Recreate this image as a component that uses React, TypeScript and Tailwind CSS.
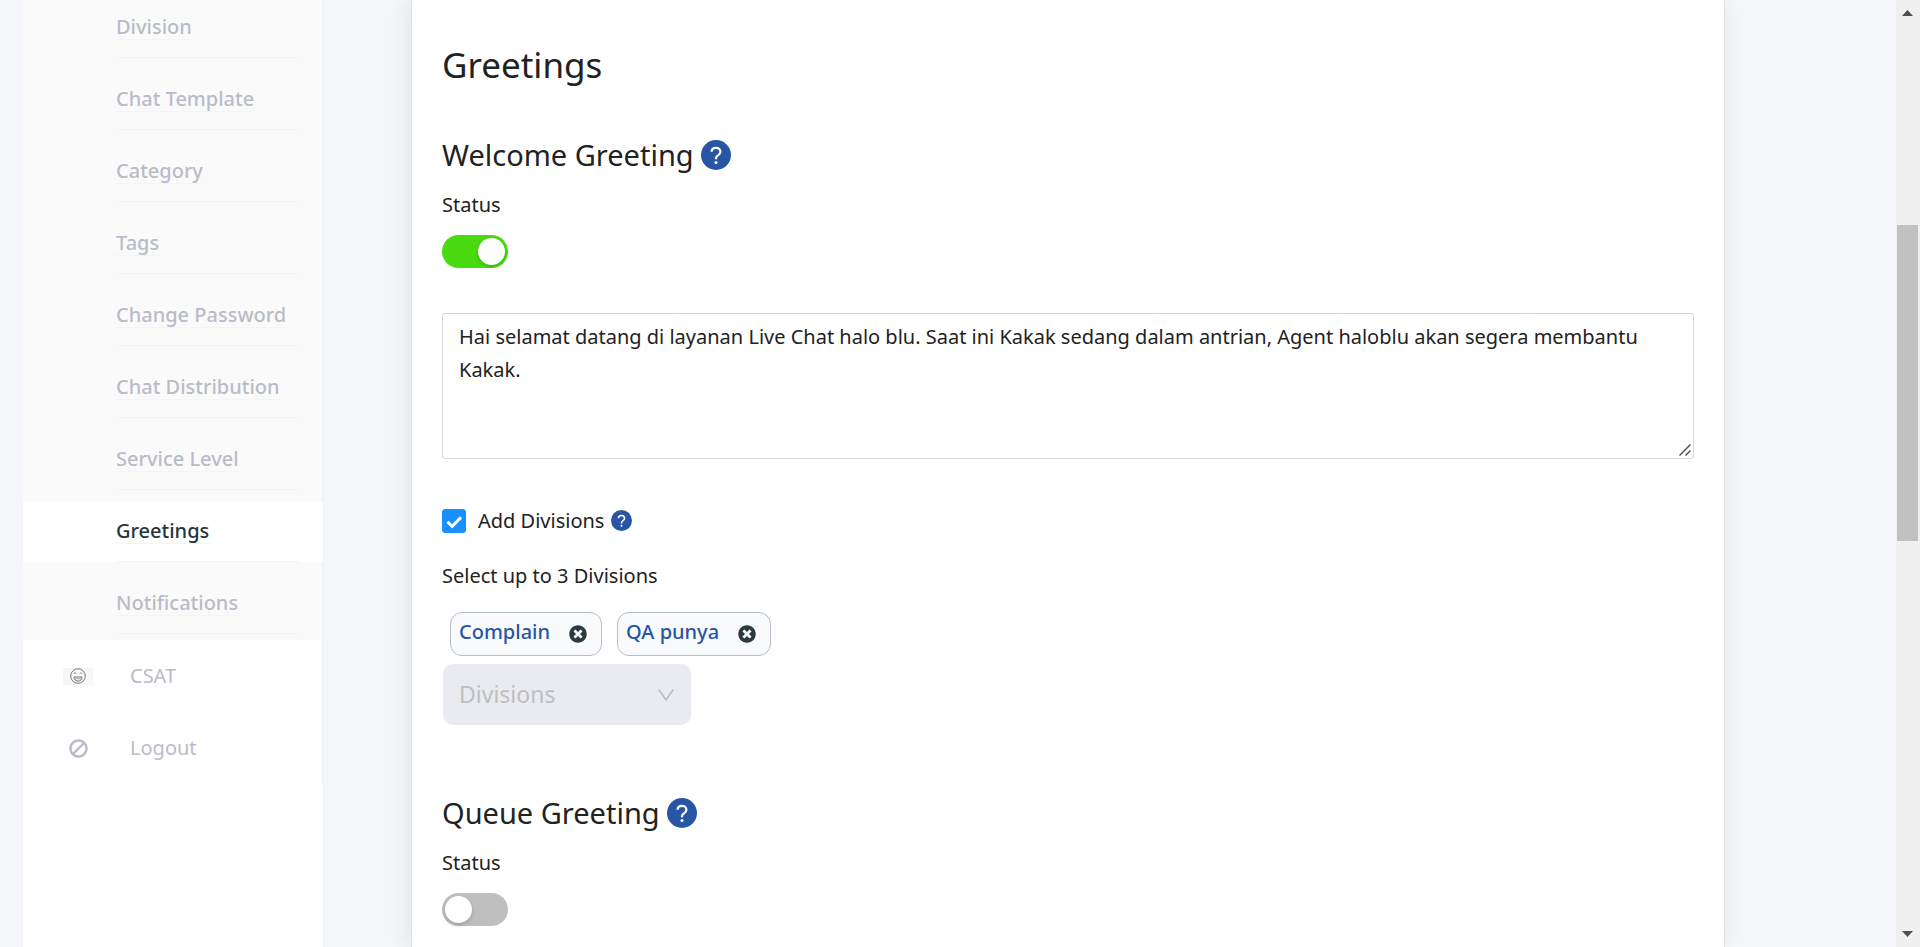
import { useState } from "react";
import { FaBan, FaTimesCircle } from "react-icons/fa";

const submenu = [
  "Division",
  "Chat Template",
  "Category",
  "Tags",
  "Change Password",
  "Chat Distribution",
  "Service Level",
  "Greetings",
  "Notifications",
];

function HelpIcon({ small = false }: { small?: boolean }) {
  return (
    <svg
      viewBox="0 0 30 30"
      className={small ? "size-[21px] shrink-0" : "size-[30px] shrink-0"}
      role="img"
      aria-label="Help"
    >
      <circle cx="15" cy="15" r="15" fill="#2955a5" />
      <path
        d="M10.6 11.8C10.6 9.3 12.5 7.8 15 7.8s4.4 1.6 4.4 3.9c0 2-1.2 3-2.6 3.9-1.3.8-1.8 1.5-1.8 2.7v.9"
        fill="none"
        stroke="#fff"
        strokeWidth="2.2"
      />
      <circle cx="15" cy="22.4" r="1.5" fill="#fff" />
    </svg>
  );
}

function SmileIcon() {
  return (
    <span className="flex h-[17px] w-[30px] items-center justify-center bg-[#f7f7f7]">
      <svg viewBox="0 0 16 16" className="size-4" fill="none" stroke="#77777b" aria-hidden="true">
        <circle cx="8" cy="8" r="7.3" strokeWidth="1" />
        <path d="M3.7 5.600c.5-1 2-1 2.500 0M9.800 5.600c.5-1 2-1 2.500 0" strokeWidth=".9" />
        <path d="M4 9h8c0 2.600-1.600 4-4 4s-4-1.400-4-4z" strokeWidth="1" />
        <path d="M5 10.700h6" strokeWidth=".6" />
      </svg>
    </span>
  );
}

function Sidebar() {
  return (
    <aside className="w-[300px] shrink-0 bg-white">
      <nav className="-mt-2">
        <ul className="flex flex-col gap-3 border-r border-[#f0f0f0] bg-[#fafafa] py-1.5">
          {submenu.map((item) => {
            const active = item === "Greetings";
            return (
              <li
                key={item}
                className={
                  active
                    ? "-mr-px flex h-[60px] bg-white pr-6 pl-[93px]"
                    : "flex h-[60px] pr-[23px] pl-[93px]"
                }
              >
                <div className="flex grow items-center border-b border-[#f4f4f6]">
                  <a
                    href="#"
                    className={
                      active
                        ? "border-b border-[#f4f4f6] text-[20px] leading-6 font-medium whitespace-nowrap text-[#263640]"
                        : "border-b border-[#f4f4f6] text-[20px] leading-6 font-medium whitespace-nowrap text-[#b9bcc8]"
                    }
                  >
                    {item}
                  </a>
                </div>
              </li>
            );
          })}
        </ul>
        <ul className="flex flex-col gap-3 border-r border-[#f0f0f0] py-1.5">
          <li>
            <a href="#" className="flex h-[60px] items-center pl-10 text-[20px] text-[#b9bcc8]">
              <SmileIcon />
              <span className="pl-[37px]">CSAT</span>
            </a>
          </li>
          <li>
            <a href="#" className="flex h-[60px] items-center pl-10 text-[20px] text-[#b9bcc8]">
              <span className="flex w-[30px] justify-center">
                <FaBan className="size-[19px] -scale-x-100" aria-hidden="true" />
              </span>
              <span className="pl-[37px]">Logout</span>
            </a>
          </li>
        </ul>
      </nav>
    </aside>
  );
}

function Toggle({ id, initial }: { id: string; initial: boolean }) {
  const [on, setOn] = useState(initial);
  return (
    <div className="mt-[9px] flex flex-col items-start gap-[14px]">
      <label htmlFor={id} className="text-[20px] leading-8">
        Status
      </label>
      <button
        id={id}
        type="button"
        role="switch"
        aria-checked={on}
        onClick={() => setOn(!on)}
        className={
          on
            ? "flex h-[33px] w-[66px] items-center justify-end rounded-full bg-[#49db10] px-[3px]"
            : "flex h-[33px] w-[66px] items-center rounded-full bg-[#bfbfbf] px-[3px]"
        }
      >
        <span className="size-[27px] rounded-full bg-white shadow-[0_2px_4px_rgba(0,35,11,0.2)]" />
      </button>
    </div>
  );
}

function Tag({ label, onRemove }: { label: string; onRemove: () => void }) {
  return (
    <li className="flex h-11 items-center gap-[19px] rounded-xl border border-[#b9bcc8] bg-[#f9fafc] pr-[14px] pl-2">
      <span className="pb-1 text-[20px] leading-7 font-medium text-[#2955a5]">{label}</span>
      <button type="button" aria-label={"Remove " + label} onClick={onRemove}>
        <FaTimesCircle className="size-[18px] text-[#2b3940]" />
      </button>
    </li>
  );
}

function Scrollbar() {
  return (
    <div className="flex w-6 shrink-0 flex-col items-start bg-[#f0f0f0] py-2.5" aria-hidden="true">
      <svg viewBox="0 0 11 6" className="ml-1.5 h-1.5 w-[11px]" fill="#505050">
        <path d="M5.500 0L11 6H0z" />
      </svg>
      <div className="mt-[209px] ml-px h-[316px] w-[21px] bg-[#c1c1c1]" />
      <svg viewBox="0 0 11 6" className="mt-auto ml-1.5 h-1.5 w-[11px]" fill="#505050">
        <path d="M5.500 6L0 0h11z" />
      </svg>
    </div>
  );
}

export default function App() {
  const [divisions, setDivisions] = useState(["Complain", "QA punya"]);
  return (
    <div className="flex h-screen overflow-hidden bg-[#f4f6fa] pl-[23px] font-['Noto_Sans',sans-serif] text-[#222]">
      <Sidebar />
      <main className="mr-[171px] ml-[88px] grow border-x border-[#dedfe1] bg-white px-[30px] pt-9 shadow-[-3px_0_22px_rgba(0,0,0,0.08)]">
        <h1 className="text-[35px] leading-[58px]">Greetings</h1>

        <section className="mt-9">
          <h2 className="flex items-center gap-[7px] text-[29px] leading-[50px]">
            Welcome Greeting <HelpIcon />
          </h2>
          <Toggle id="welcome-status" initial={true} />
          <div className="relative mt-[45px]">
            <textarea
              aria-label="Welcome greeting message"
              className="block h-[146px] w-full resize-none rounded-[3px] border border-[#d9d9d9] px-4 py-[6px] text-[20px] leading-[33px] outline-none"
              defaultValue="Hai selamat datang di layanan Live Chat halo blu. Saat ini Kakak sedang dalam antrian, Agent haloblu akan segera membantu Kakak."
            />
            <svg
              viewBox="0 0 12 12"
              className="pointer-events-none absolute right-[3px] bottom-[3px] size-3"
              stroke="#555"
              strokeWidth="1.500"
              aria-hidden="true"
            >
              <path d="M.5 11.500l11-11M6.500 11.500l5-5" />
            </svg>
          </div>
          <div className="mt-[45px] flex items-center">
            <label className="flex items-center gap-3 text-[20px] leading-[33px]">
              <span className="grid size-6">
                <input
                  type="checkbox"
                  defaultChecked
                  className="peer col-start-1 row-start-1 size-6 appearance-none rounded-[3px] border border-[#d9d9d9] bg-white checked:border-[#1890ff] checked:bg-[#1890ff]"
                />
                <svg
                  viewBox="0 0 24 24"
                  className="pointer-events-none col-start-1 row-start-1 hidden size-6 peer-checked:block"
                  fill="none"
                  stroke="#fff"
                  strokeWidth="3"
                  aria-hidden="true"
                >
                  <path d="M5.500 12.800l4.700 4.600 8.800-9.200" />
                </svg>
              </span>
              Add Divisions
            </label>
            <span className="ml-[7px]">
              <HelpIcon small />
            </span>
          </div>
          <p className="mt-[22px] text-[20px] leading-[33px]">Select up to 3 Divisions</p>
          <ul className="mt-5 flex gap-[15px] pl-2">
            {divisions.map((d) => (
              <Tag
                key={d}
                label={d}
                onRemove={() => setDivisions(divisions.filter((x) => x !== d))}
              />
            ))}
          </ul>
          <div className="mt-2 ml-px grid w-[248px] items-center">
            <select
              disabled
              aria-label="Divisions"
              className="col-start-1 row-start-1 h-[61px] appearance-none rounded-[10px] bg-[#eaebf0] pl-4 text-[23px] text-[#bfbfbf] opacity-100"
            >
              <option>Divisions</option>
            </select>
            <svg
              viewBox="0 0 16 12"
              className="pointer-events-none col-start-1 row-start-1 mr-[17px] h-3 w-4 justify-self-end"
              fill="none"
              stroke="#b9bac0"
              strokeWidth="1.500"
              aria-hidden="true"
            >
              <path d="M.8.8L8 10.800 15.200.8" />
            </svg>
          </div>
        </section>

        <section className="mt-[63px]">
          <h2 className="flex items-center gap-[7px] text-[29px] leading-[50px]">
            Queue Greeting <HelpIcon />
          </h2>
          <Toggle id="queue-status" initial={false} />
        </section>
      </main>
      <Scrollbar />
    </div>
  );
}
